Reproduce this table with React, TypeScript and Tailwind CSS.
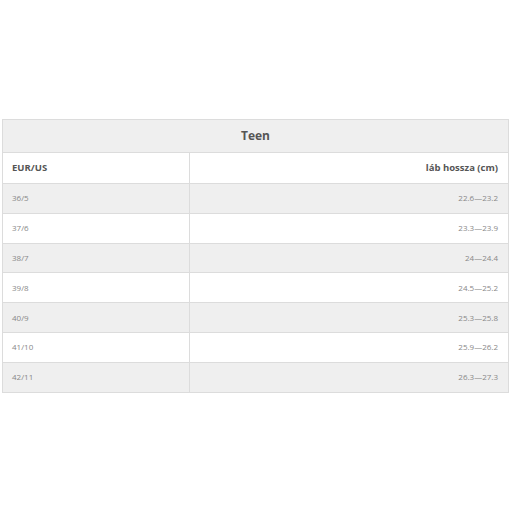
import React from "react";

const rows: [string, string][] = [
  ["36/5", "22.6—23.2"],
  ["37/6", "23.3—23.9"],
  ["38/7", "24—24.4"],
  ["39/8", "24.5—25.2"],
  ["40/9", "25.3—25.8"],
  ["41/10", "25.9—26.2"],
  ["42/11", "26.3—27.3"],
];

export default function App() {
  return (
    <div
      className="w-[512px] h-[512px] bg-white pt-[119px] px-[2px]"
      style={{ fontFamily: '"Open Sans", sans-serif' }}
    >
      <table className="w-[507px] border-collapse border border-[#dcdcdc] table-fixed">
        <colgroup>
          <col className="w-[187px]" />
          <col />
        </colgroup>
        <thead>
          <tr className="bg-[#efefef] h-[33px]">
            <th colSpan={2} className="text-[12px] font-bold text-[#555] text-center border border-[#dcdcdc]">
              Teen
            </th>
          </tr>
          <tr className="bg-white h-[31px]">
            <th className="text-[9.5px] font-bold text-[#555] text-left pl-[9px] border border-[#dcdcdc]">
              EUR/US
            </th>
            <th className="text-[9.5px] font-bold text-[#555] text-right pr-[10px] border border-[#dcdcdc]">
              láb hossza (cm)
            </th>
          </tr>
        </thead>
        <tbody>
          {rows.map(([a, b], i) => (
            <tr key={a} className={(i % 2 === 0 ? "bg-[#efefef]" : "bg-white") + " h-[29.8px]"}>
              <td className="text-[8px] text-[#888] text-left pl-[9px] border border-[#dcdcdc]">{a}</td>
              <td className="text-[8px] text-[#888] text-right pr-[10px] border border-[#dcdcdc]">{b}</td>
            </tr>
          ))}
        </tbody>
      </table>
    </div>
  );
}
